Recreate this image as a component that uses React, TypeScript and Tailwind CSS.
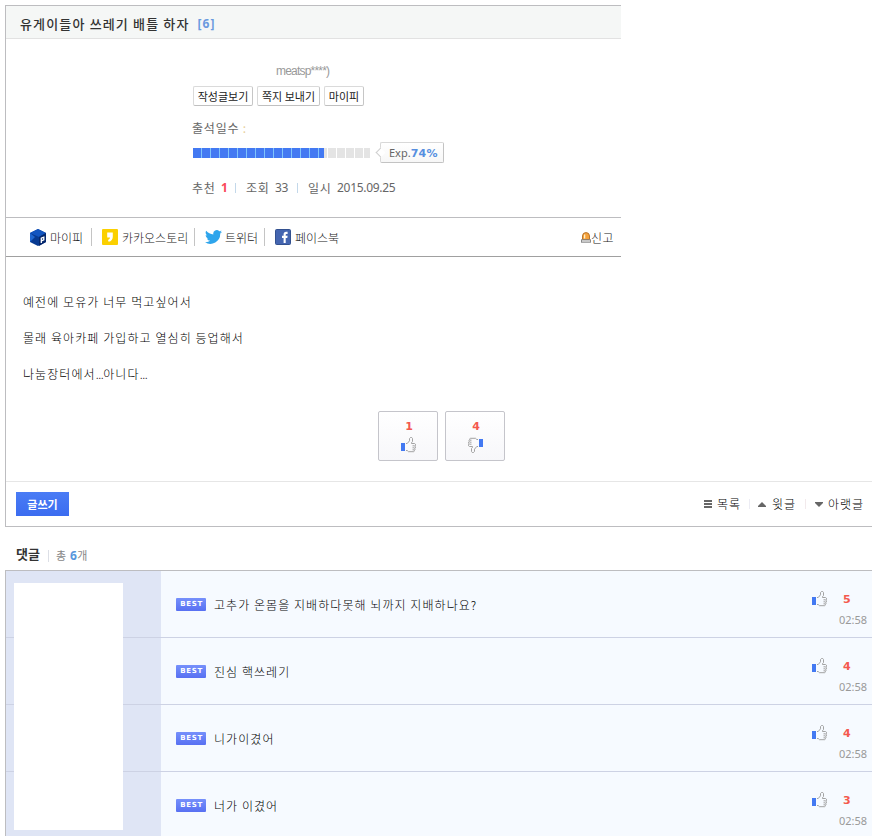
import { clsx } from "clsx";

const comments = [
  { text: "고추가 온몸을 지배하다못해 뇌까지 지배하나요?", likes: 5, time: "02:58" },
  { text: "진심 핵쓰레기", likes: 4, time: "02:58" },
  { text: "니가이겼어", likes: 4, time: "02:58" },
  { text: "너가 이겼어", likes: 3, time: "02:58" },
];

const ThumbIcon = ({ down = false }: { down?: boolean }) => (
  <svg width="15" height="16" viewBox="0 0 15 16" fill="none" className={clsx("block shrink-0", down && "rotate-180")}>
    <rect x="0" y="6" width="4" height="8" fill="#4379f2" />
    <path
      d="M5 6.5h1.2L7.5 5l1-1.2V1.6l1-1.1h1.2l.8 1v3l-1 1.2v.8h3l1 .8v1.2l-.8.6.8.6v1l-.8.6.3.6v1l-.8.6v.8l-.7.4H7.5L6.2 13.5H5M11.5 8.8h2M11.5 10.8h2M11.5 12.8h1.5"
      stroke="#999"
      strokeWidth="0.9"
    />
  </svg>
);

const SmallButton = ({ label, className }: { label: string; className: string }) => (
  <button className={clsx("h-5 rounded-[2px] border border-[#dadada] border-r-[#c6c6c6] border-b-[#c0c0c0] bg-white text-[11px] leading-[18px] text-[#222]", className)}>
    {label}
  </button>
);

const ShareBar = () => (
  <div className="flex h-10 w-[615px] items-center border-t border-b border-t-[#bdbdc0] border-b-[#a0a0a0] pr-[7px] pl-6 text-[12px] font-light text-[#222]">
    <svg width="16" height="17" viewBox="0 0 16 17" className="mr-1 shrink-0">
      <path d="M8 0l8 4v9l-8 4-8-4V4z" fill="#073a91" />
      <path d="M8 0l8 4-7 4-9-4z" fill="#1255c0" />
      <path d="M0 4l5 4-5 5z" fill="#1f66cf" />
      <path d="M9 8l7-4v9l-7 4z" fill="#04276d" />
      <path d="M11.3 14V9.2l2.5-1v2.6l-2.3 1" fill="none" stroke="#fff" strokeWidth="1.3" />
    </svg>
    <span className="w-[41px] pt-px">마이피</span>
    <span className="mr-[10px] h-[18px] w-px bg-[#c4c4c4]" />
    <svg width="16" height="16" viewBox="0 0 16 16" className="mr-1 shrink-0">
      <rect width="16" height="16" rx="1" fill="#fbd000" />
      <path d="M5.2 3.5h5.6v4.2c0 2.7-1.4 4.6-4.2 5.1L6 11c1.3-.4 1.9-1.3 2-2.4H5.2z" fill="#fff" />
    </svg>
    <span className="w-[72px] pt-0.5">카카오스토리</span>
    <span className="mr-[10px] h-[18px] w-px bg-[#c4c4c4]" />
    <svg width="17" height="14" viewBox="0 2 24 20" preserveAspectRatio="none" className="mr-[3px] shrink-0">
      <path
        d="M24 4.6a9.9 9.9 0 0 1-2.8.8 4.9 4.9 0 0 0 2.1-2.7 9.9 9.9 0 0 1-3.1 1.2 4.9 4.9 0 0 0-8.4 4.5A14 14 0 0 1 1.7 3.2a4.9 4.9 0 0 0 1.5 6.5A4.9 4.9 0 0 1 1 9.1a4.9 4.9 0 0 0 3.9 4.9 4.9 4.9 0 0 1-2.2.1 4.9 4.9 0 0 0 4.6 3.4A9.9 9.9 0 0 1 0 19.5 14 14 0 0 0 21.5 7.1 10 10 0 0 0 24 4.6z"
        fill="#2ea5ec"
      />
    </svg>
    <span className="w-[39px] pt-0.5">트위터</span>
    <span className="mr-[10px] h-[18px] w-px bg-[#c4c4c4]" />
    <svg width="16" height="16" viewBox="0 0 16 16" className="mr-1 shrink-0">
      <rect x=".5" y=".5" width="15" height="15" rx="1" fill="#4465b0" stroke="#33518f" />
      <path d="M8.6 14V9H7V6.8h1.6V5.4c0-1.8.9-2.6 2.5-2.6h1.5V5h-1.1c-.6 0-.8.2-.8.8v1h1.9L12.3 9h-1.6v5z" fill="#fff" />
    </svg>
    <span className="pt-0.5">페이스북</span>
    <svg width="10" height="11" viewBox="0 0 10 11" className="ml-auto shrink-0">
      <path d="M1.5 7.5V4A3.5 3.5 0 0 1 5 .6 3.5 3.5 0 0 1 8.5 4v3.5z" fill="#f6a13a" stroke="#b8752d" />
      <path d="M3.6 2.5v4" stroke="#fff0c8" strokeWidth="1.3" />
      <rect x=".4" y="7.8" width="9.2" height="2.4" fill="#ddd" stroke="#777" strokeWidth=".8" />
    </svg>
    <span className="pt-0.5 tracking-[0.5px]">신고</span>
  </div>
);

const AuthorInfo = () => (
  <div className="flex h-[178px] flex-col items-start pt-[23px] pl-[186px] text-[12px] leading-4 text-[#666]">
    <div className="ml-[84px] pt-px font-['Liberation_Sans'] tracking-[-0.8px] text-[#999]">meatsp****)</div>
    <div className="mt-[7px] ml-px flex gap-1">
      <SmallButton label="작성글보기" className="w-[60px]" />
      <SmallButton label="쪽지 보내기" className="w-[63px]" />
      <SmallButton label="마이피" className="w-10" />
    </div>
    <div className="mt-[14px] tracking-[0.8px]">
      출석일수 <span className="text-[#e8cf9b]">:</span>
    </div>
    <div className="mt-[6px] flex h-[21px] items-center">
      <div className="ml-px flex h-[10px] w-[178px] bg-[#e4e4e4]">
        {Array.from({ length: 20 }, (_, i) => (
          <span key={i} className={clsx("h-full w-[9px] shrink-0 border-r last:w-[7px]", i < 14 ? "border-[#7fc4fb] bg-[#4379f2]" : "border-white")}>
            {i === 14 && <span className="block h-full w-[5px] bg-[#4379f2]" />}
          </span>
        ))}
      </div>
      <div className="relative ml-[9px] h-[21px] w-[64px] rounded-[2px] border border-[#d8d8d8] border-r-[#c3c3c3] border-b-[#c3c3c3] bg-linear-to-b from-white to-[#f7f7f7] pl-2 font-['Noto_Sans'] text-[11px] leading-[19px] text-[#666]">
        <span className="absolute top-[6px] -left-1 h-[7px] w-[7px] rotate-45 border-b border-l border-[#cfcfcf] bg-white" />
        Exp.<b className="font-['DejaVu_Sans'] text-[11px] tracking-[0.3px] text-[#568fe0]">74%</b>
      </div>
    </div>
    <div className="mt-[17px] flex h-4 items-center whitespace-pre">
      <span className="w-[29px] tracking-[0.6px]">추천</span>
      <b className="w-[14px] font-['Noto_Sans'] text-[12px] text-[#fa4a5a]">1</b>
      <span className="mr-[10px] h-[10px] w-px bg-[#c3d8ea]" />
      <span className="w-[29px] tracking-[0.6px]">조회</span>
      <span className="w-[22px] font-['Noto_Sans'] tracking-[-0.3px]">33</span>
      <span className="mr-[10px] h-[10px] w-px bg-[#c3d8ea]" />
      <span className="w-[29px] tracking-[0.6px]">일시</span>
      <span className="font-['Noto_Sans'] tracking-[-0.3px]">2015.09.25</span>
    </div>
  </div>
);

const VoteBox = ({ count, down }: { count: number; down?: boolean }) => (
  <button className="flex h-[50px] w-[60px] flex-col items-center rounded-[2px] border border-[#c5c5cb] bg-linear-to-b from-white to-[#f7f7fa] pt-2">
    <span className="ml-0.5 font-['DejaVu_Sans'] text-[11px] leading-[14px] font-bold text-[#f4594e]">{count}</span>
    <span className="mt-[3px] ml-px">
      <ThumbIcon down={down} />
    </span>
  </button>
);

const PostFooter = () => (
  <div className="flex h-[45px] items-center border-t border-[#e6e6e6] pr-2 pl-[10px] text-[12px] font-light text-black">
    <button className="h-6 w-[53px] bg-linear-to-b from-[#4a7cf5] to-[#3b6cf0] text-[11px] leading-6 font-bold text-white">글쓰기</button>
    <svg width="9" height="8" viewBox="0 0 9 8" className="mr-1 ml-auto">
      <path d="M0 1h8M0 4h8M0 7h8" stroke="#666" strokeWidth="2" />
    </svg>
    <span className="w-8 tracking-[0.9px]">목록</span>
    <span className="mr-2 h-[10px] w-px bg-[#ececf4]" />
    <svg width="8" height="5" viewBox="0 0 8 5" className="mr-[6px]">
      <path d="M4 0l4 4v1H0V4z" fill="#666" />
    </svg>
    <span className="w-[33px] tracking-[0.9px]">윗글</span>
    <span className="mr-[9px] h-[10px] w-px bg-[#f2eaec]" />
    <svg width="8" height="5" viewBox="0 0 8 5" className="mr-[5px]">
      <path d="M0 0h8v1L4 5 0 1z" fill="#666" />
    </svg>
    <span className="w-9 tracking-[0.9px] whitespace-nowrap">아랫글</span>
  </div>
);

const CommentRow = ({ text, likes, time }: { text: string; likes: number; time: string }) => (
  <li className="flex h-[67px] border-b border-[#cdd2e4]">
    <div className="w-[155px] shrink-0 bg-[#dfe5f5]" />
    <div className="flex flex-1 items-center bg-[#f6faff] pl-[15px]">
      <span className="h-[13px] w-[30px] rounded-[1px] bg-linear-to-b from-[#7690fb] to-[#5870f2] pl-px text-center font-['DejaVu_Sans'] text-[7px] leading-[13px] font-bold tracking-[0.7px] text-white">BEST</span>
      <p className="ml-2 pt-0.5 font-light tracking-[1.06px] text-black">{text}</p>
    </div>
    <div className="w-[60px] shrink-0 bg-[#f6faff] pt-5">
      <div className="flex items-start">
        <ThumbIcon />
        <b className="ml-4 pt-0.5 font-['DejaVu_Sans'] text-[11px] leading-[14px] text-[#f4594e]">{likes}</b>
      </div>
      <div className="mt-[5px] pl-[27px] font-['Noto_Sans'] text-[11px] leading-4 text-[#999]">{time}</div>
    </div>
  </li>
);

const App = () => {
  return (
    <div className="h-[836px] w-[872px] overflow-hidden bg-white pt-[5px] pl-[5px] font-['Noto_Sans_CJK_KR',sans-serif] text-[12px] leading-4">
      <article className="h-[522px] border-b border-l border-[#bdbdc0]">
        <h1 className="flex h-[34px] w-[615px] items-center border-t border-b border-t-[#bdbdc0] border-b-[#e2e2e2] bg-[#f5f7f6] pt-[3px] pl-[14px] text-[13px] font-medium tracking-[1.15px] text-[#333]">
          유게이들아 쓰레기 배틀 하자
          <span className="ml-2 font-['Noto_Sans'] text-[12px] font-bold tracking-[1px] text-[#6a9adf]">[6]</span>
        </h1>
        <AuthorInfo />
        <ShareBar />
        <div className="h-[224px] pt-[37px] pl-[17px] font-light tracking-[1.08px] text-black">
          <p className="mb-5 leading-4">예전에 모유가 너무 먹고싶어서</p>
          <p className="mb-5 leading-4">몰래 육아카페 가입하고 열심히 등업해서</p>
          <p className="leading-4">
            나눔장터에서<span className="tracking-[-0.5px]">...</span>아니다<span className="tracking-[-0.5px]">...</span>
          </p>
          <div className="mt-[29px] ml-[355px] flex gap-[7px] tracking-normal">
            <VoteBox count={1} />
            <VoteBox count={4} down />
          </div>
        </div>
        <PostFooter />
      </article>

      <div className="flex h-[43px] items-center pt-[10px] pl-[11px]">
        <h2 className="text-[13px] font-bold text-[#333]">댓글</h2>
        <span className="mt-[5px] mr-[7px] ml-2 h-3 w-px bg-[#dcdfe6]" />
        <span className="mt-1 text-[11px] tracking-[0.3px] text-[#888]">
          총 <b className="ml-px font-['Noto_Sans'] text-[12px] text-[#5796dc]">6</b>개
        </span>
      </div>

      <section className="relative border-t border-l border-[#bdbdc0]">
        <ul>
          {comments.map((comment) => (
            <CommentRow key={comment.text} {...comment} />
          ))}
        </ul>
        {/* Blank panel over the nickname column */}
        <div className="absolute top-3 left-2 h-[247px] w-[109px] bg-white" />
      </section>
    </div>
  );
};

export default App;
